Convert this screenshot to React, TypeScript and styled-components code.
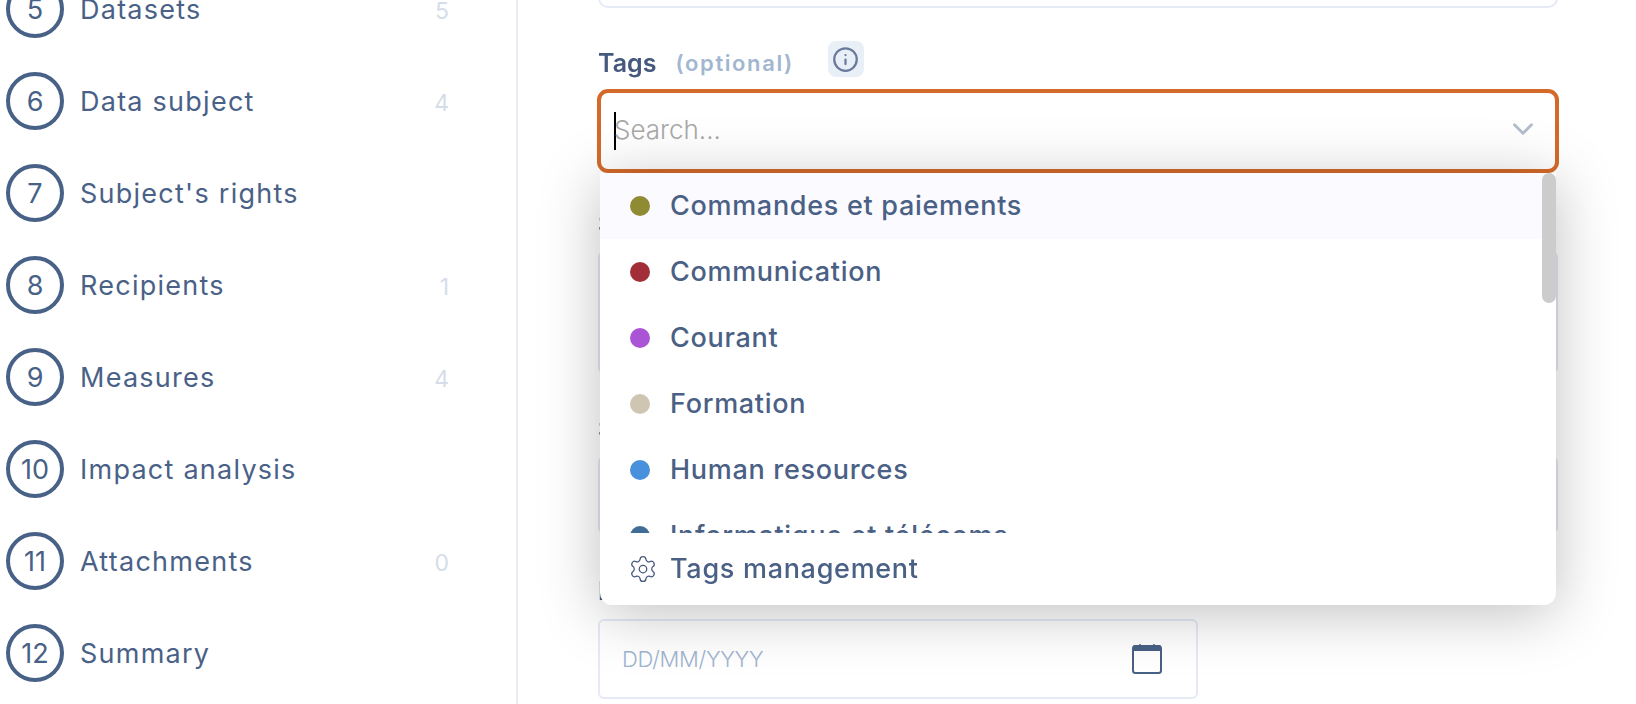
import React from 'react';
import styled, { createGlobalStyle } from 'styled-components';
import { ChevronDown, Info, Settings } from 'lucide-react';

const GlobalStyle = createGlobalStyle`
  html, body {
    margin: 0;
    padding: 0;
    background: #fff;
  }
  body {
    font-family: 'Inter', 'Noto Sans', sans-serif;
    color: #46597d;
  }
  * {
    box-sizing: border-box;
  }
`;

const Page = styled.div`
  display: flex;
  height: 704px;
  overflow: hidden;
  background: #fff;
`;

const Sidebar = styled.aside`
  width: 518px;
  flex-shrink: 0;
  padding: 0 67px 0 6px;
  border-right: 2px solid #e9edf4;
`;

const StepList = styled.ol`
  list-style: none;
  margin: -20px 0 0;
  padding: 0;
  display: flex;
  flex-direction: column;
  gap: 34px;
`;

const Step = styled.li`
  display: flex;
  align-items: center;
  height: 58px;
`;

const StepNumber = styled.span`
  width: 58px;
  height: 58px;
  flex-shrink: 0;
  display: flex;
  align-items: center;
  justify-content: center;
  border: 4px solid #486186;
  border-radius: 50%;
  font-size: 27px;
  color: #486186;
`;

const StepLabel = styled.span`
  margin-left: 16px;
  font-size: 27px;
  letter-spacing: 1.25px;
  color: #4a6187;
`;

const StepCount = styled.span`
  margin-left: auto;
  padding-top: 4px;
  font-size: 23px;
  color: #d5dde9;
`;

const Main = styled.main`
  width: 960px;
  margin-left: 80px;
`;

const TopField = styled.div`
  height: 68px;
  margin-top: -60px;
  border: 2px solid #e6eaf5;
  border-radius: 10px;
`;

const FieldGroup = styled.div<{ $top: number }>`
  margin-top: ${(p) => p.$top}px;
`;

const LabelRow = styled.div<{ $bottom: number }>`
  display: flex;
  align-items: center;
  height: 36px;
  margin-bottom: ${(p) => p.$bottom}px;
`;

const Label = styled.label<{ $drop?: number }>`
  margin-top: ${(p) => p.$drop ?? 0}px;
  font-size: 25px;
  font-weight: 600;
  color: #46597d;
  will-change: transform;
`;

const Optional = styled.span`
  margin-left: 19px;
  padding-top: 8px;
  font-size: 22px;
  font-weight: 600;
  letter-spacing: 1.6px;
  color: #a3b6d0;
`;

const InfoButton = styled.button`
  width: 36px;
  height: 36px;
  margin-left: 34px;
  padding: 0;
  display: flex;
  align-items: center;
  justify-content: center;
  border: none;
  border-radius: 8px;
  background: #e8eff7;
  color: #6b7a9c;
`;

const SelectWrap = styled.div`
  position: relative;
  z-index: 2;
  margin: 0 -1px;
`;

const SelectBox = styled.div`
  height: 84px;
  display: flex;
  align-items: center;
  padding: 0 15px 4px 13px;
  border: 4px solid #d46a2a;
  border-radius: 11px;
  background: #fff;
  color: #b3bcc9;
`;

const Caret = styled.span`
  width: 2px;
  height: 38px;
  margin-top: 4px;
  background: #000;
`;

const Placeholder = styled.span`
  flex: 1;
  margin-left: -2px;
  font-size: 26px;
  font-weight: 300;
  color: #a8a8a8;
`;

const Dropdown = styled.div`
  position: absolute;
  top: 100%;
  left: 3px;
  right: 3px;
  border-radius: 0 0 12px 12px;
  background: #fff;
  box-shadow: 0 8px 60px rgba(0, 0, 0, 0.25);
  overflow: hidden;
`;

const OptionList = styled.div`
  position: relative;
  height: 360px;
  overflow: hidden;
`;

const ScrollThumb = styled.div`
  position: absolute;
  top: 0;
  right: 0;
  width: 14px;
  height: 130px;
  border-radius: 7px;
  background: #ccc;
`;

const Option = styled.div<{ $active?: boolean }>`
  height: 66px;
  display: flex;
  align-items: center;
  padding-left: 30px;
  background: ${(p) => (p.$active ? '#fafaff' : '#fff')};
`;

const Dot = styled.span<{ $color: string }>`
  width: 20px;
  height: 20px;
  flex-shrink: 0;
  border-radius: 50%;
  background: ${(p) => p.$color};
`;

const OptionText = styled.span`
  margin-left: 20px;
  padding-bottom: 2px;
  font-size: 27px;
  font-weight: 500;
  letter-spacing: 0.7px;
  color: #4a6085;
`;

const DropdownFooter = styled.div`
  height: 72px;
  display: flex;
  align-items: center;
  gap: 12px;
  padding-left: 28px;
  color: #46597d;

  ${OptionText} {
    margin-left: 0;
  }
`;

const TextArea = styled.div`
  height: 125px;
  border: 2px solid #e4e8f4;
  border-radius: 8px;
`;

const TextInput = styled.div`
  height: 80px;
  border: 2px solid #e4e8f4;
  border-radius: 8px;
`;

const DateInput = styled.div`
  width: 600px;
  height: 80px;
  display: flex;
  align-items: center;
  justify-content: space-between;
  padding: 0 34px 0 22px;
  border: 2px solid #e6eaf5;
  border-radius: 6px;
`;

const DatePlaceholder = styled.span`
  font-size: 22px;
  font-weight: 300;
  letter-spacing: -0.3px;
  color: #a0b4cf;
`;

const steps = [
  { n: 5, label: 'Datasets', count: 5 },
  { n: 6, label: 'Data subject', count: 4 },
  { n: 7, label: "Subject's rights" },
  { n: 8, label: 'Recipients', count: 1 },
  { n: 9, label: 'Measures', count: 4 },
  { n: 10, label: 'Impact analysis' },
  { n: 11, label: 'Attachments', count: 0 },
  { n: 12, label: 'Summary' },
];

const tags = [
  { label: 'Commandes et paiements', color: '#8e8b33' },
  { label: 'Communication', color: '#a22f37' },
  { label: 'Courant', color: '#a955d6' },
  { label: 'Formation', color: '#cec6b3' },
  { label: 'Human resources', color: '#4990dd' },
  { label: 'Informatique et télécoms', color: '#3f6d96' },
];

const CalendarIcon = () => (
  <svg width="30" height="30" viewBox="0 0 30 30" fill="none">
    <rect x="1" y="2" width="28" height="27" rx="2.5" stroke="#486186" strokeWidth="2" />
    <path d="M1 3 a2 2 0 0 1 2-2 h24 a2 2 0 0 1 2 2 V7 H1 Z" fill="#486186" />
    <path d="M8 0 V2 M22 0 V2" stroke="#486186" strokeWidth="1.5" />
  </svg>
);

export default function App() {
  return (
    <>
      <GlobalStyle />
      <Page>
        <Sidebar>
          <StepList>
            {steps.map((s) => (
              <Step key={s.n}>
                <StepNumber>{s.n}</StepNumber>
                <StepLabel>{s.label}</StepLabel>
                {s.count !== undefined && <StepCount>{s.count}</StepCount>}
              </Step>
            ))}
          </StepList>
        </Sidebar>
        <Main>
          <TopField />
          <FieldGroup $top={33}>
            <LabelRow $bottom={12}>
              <Label $drop={8}>Tags</Label>
              <Optional>(optional)</Optional>
              <InfoButton>
                <Info size={27} strokeWidth={2} />
              </InfoButton>
            </LabelRow>
            <SelectWrap>
              <SelectBox>
                <Caret />
                <Placeholder>Search...</Placeholder>
                <ChevronDown size={34} strokeWidth={2} />
              </SelectBox>
              <Dropdown>
                <OptionList>
                  {tags.map((t, i) => (
                    <Option key={t.label} $active={i === 0}>
                      <Dot $color={t.color} />
                      <OptionText>{t.label}</OptionText>
                    </Option>
                  ))}
                  <ScrollThumb />
                </OptionList>
                <DropdownFooter>
                  <Settings size={30} strokeWidth={1} />
                  <OptionText>Tags management</OptionText>
                </DropdownFooter>
              </Dropdown>
            </SelectWrap>
          </FieldGroup>
          <FieldGroup $top={33}>
            <LabelRow $bottom={8}>
              <Label>Status</Label>
            </LabelRow>
            <TextArea />
          </FieldGroup>
          <FieldGroup $top={36}>
            <LabelRow $bottom={8}>
              <Label>Sector</Label>
            </LabelRow>
            <TextInput />
          </FieldGroup>
          <FieldGroup $top={40}>
            <LabelRow $bottom={8}>
              <Label $drop={-4}>Deployment date</Label>
            </LabelRow>
            <DateInput>
              <DatePlaceholder>DD/MM/YYYY</DatePlaceholder>
              <CalendarIcon />
            </DateInput>
          </FieldGroup>
        </Main>
      </Page>
    </>
  );
}
